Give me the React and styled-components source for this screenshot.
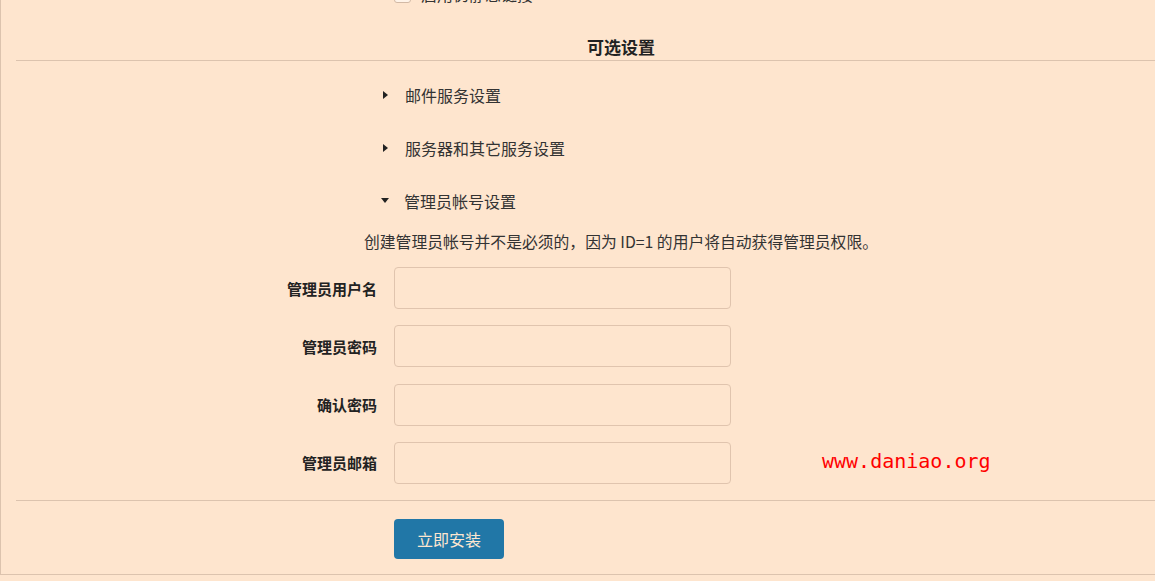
import React from "react";
import styled, { createGlobalStyle } from "styled-components";

const GlobalStyle = createGlobalStyle`
  html, body {
    margin: 0;
    overflow: hidden;
    background: #fee5ce;
  }
  body {
    font-family: "Noto Sans CJK SC", "Noto Sans", sans-serif;
    color: #333;
  }
`;

const Panel = styled.div`
  position: relative;
  box-sizing: border-box;
  width: 1242px;
  margin-top: -30px;
  padding: 0 15px 15px;
  border: 1px solid #dcc3ae;
  border-top: none;
`;

const CheckRow = styled.label`
  display: flex;
  align-items: center;
  gap: 10px;
  height: 24px;
  padding-top: 12px;
  margin-left: 378px;
  font-size: 16px;
  line-height: 24px;
`;

const CheckBox = styled.span`
  box-sizing: border-box;
  width: 17px;
  height: 17px;
  border: 1px solid #d2b9a5;
  border-radius: 3px;
  background: #fff3e8;
`;

const SectionTitle = styled.h3`
  margin: 29px 0 0;
  padding-bottom: 1px;
  border-bottom: 1px solid #dcc3ae;
  text-align: center;
  font-size: 17px;
  font-weight: 700;
  line-height: 24px;
  color: #222;
`;

const DetailsList = styled.div`
  padding-top: 7px;
  padding-left: 367px;
`;

const Summary = styled.div`
  display: flex;
  align-items: center;
  height: 53px;
  font-size: 16px;
  color: #333;
`;

const Marker = styled.span`
  display: inline-block;
  width: 0;
  height: 0;
  margin-right: ${(p) => (p.$open ? "15px" : "17px")};
  ${(p) =>
    p.$open
      ? `border-left: 4.5px solid transparent;
         border-right: 4.5px solid transparent;
         border-top: 5px solid #222;
         margin-left: -2px;`
      : `border-top: 4.5px solid transparent;
         border-bottom: 4.5px solid transparent;
         border-left: 5.5px solid #222;`}
`;

const Note = styled.p`
  margin: 3px 0 13px;
  text-align: center;
  font-size: 15.8px;
  line-height: 24px;
  color: #333;
`;

const FieldRow = styled.div`
  display: grid;
  grid-template-columns: 361px 337px;
  column-gap: 17px;
  align-items: center;
  margin-bottom: 16.3px;
`;

const FieldLabel = styled.label`
  text-align: right;
  font-size: 15px;
  font-weight: 700;
  color: #222;
`;

const Input = styled.input`
  box-sizing: border-box;
  height: 42px;
  width: 100%;
  border: 1px solid #e0c4ae;
  border-radius: 4px;
  background: transparent;
  padding: 0 10px;
  font: inherit;
  outline: none;
`;

const Divider = styled.hr`
  margin: 0;
  border: none;
  border-top: 1px solid #dcc3ae;
`;

const Actions = styled.div`
  padding: 18px 0 0 378px;
`;

const SubmitButton = styled.button`
  display: block;
  width: 110px;
  height: 40px;
  border: none;
  border-radius: 4px;
  background: #2177a7;
  color: #fde6d0;
  font-family: "Noto Sans CJK SC", sans-serif;
  font-size: 16px;
  cursor: pointer;
`;

const Watermark = styled.div`
  position: absolute;
  left: 821px;
  top: 479px;
  font-family: "DejaVu Sans Mono", monospace;
  font-size: 20px;
  line-height: 24px;
  color: #ff0000;
`;

const fields = ["管理员用户名", "管理员密码", "确认密码", "管理员邮箱"];

const sections = [
  { title: "邮件服务设置", open: false },
  { title: "服务器和其它服务设置", open: false },
  { title: "管理员帐号设置", open: true },
];

export default function App() {
  return (
    <>
      <GlobalStyle />
      <Panel>
        <CheckRow>
          <CheckBox />
          启用伪静态链接
        </CheckRow>

        <SectionTitle>可选设置</SectionTitle>

        <DetailsList>
          {sections.map((s) => (
            <Summary key={s.title}>
              <Marker $open={s.open} />
              {s.title}
            </Summary>
          ))}
        </DetailsList>

        <Note>创建管理员帐号并不是必须的，因为 ID=1 的用户将自动获得管理员权限。</Note>

        {fields.map((f) => (
          <FieldRow key={f}>
            <FieldLabel>{f}</FieldLabel>
            <Input type={f.includes("密码") ? "password" : "text"} />
          </FieldRow>
        ))}

        <Divider />

        <Actions>
          <SubmitButton>立即安装</SubmitButton>
        </Actions>

        <Watermark>www.daniao.org</Watermark>
      </Panel>
    </>
  );
}
